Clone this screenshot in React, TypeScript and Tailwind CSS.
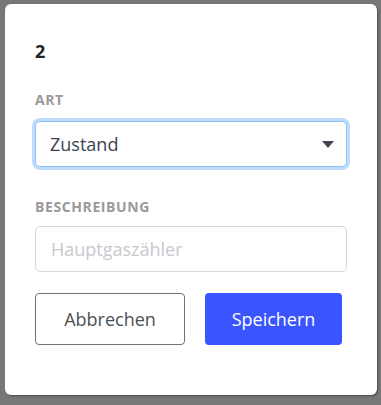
import React from 'react';

const App: React.FC = () => {
  return (
    <div
      className="h-[405px] w-[381px] bg-[#777777] pt-[4px] pl-[5px]"
      style={{ fontFamily: '"Open Sans", "Noto Sans", sans-serif' }}
    >
      {/* Dialog */}
      <div className="w-[372px] h-[391px] bg-white rounded-[6px] px-[30px] pt-[33px] shadow-[1px_1px_2px_rgba(0,0,0,0.35)]">
        <h2 className="text-[18px] leading-[28px] font-bold text-[#1f2328]">2</h2>

        <label className="block mt-[25px] mb-[11px] text-[14px] leading-[20px] font-bold uppercase tracking-[0.6px] text-[#9a9a9a]">
          Art
        </label>
        <div className="relative">
          <select
            defaultValue="Zustand"
            className="appearance-none w-full h-[46px] rounded-[5px] border border-[#8fc1fb] ring-[3px] ring-[#bfdcfd] bg-white pl-[14px] pr-10 text-[18px] text-[#3b4350] outline-none"
          >
            <option>Zustand</option>
            <option>Zähler</option>
          </select>
          <svg
            className="absolute right-[13px] top-[20px] pointer-events-none"
            width="12"
            height="7"
            viewBox="0 0 12 7"
          >
            <path d="M0 0 H12 L6 7 Z" fill="#3f4650" />
          </svg>
        </div>

        <label className="block mt-[30px] mb-[9px] text-[14px] leading-[20px] font-bold uppercase tracking-[0.6px] text-[#9a9a9a]">
          Beschreibung
        </label>
        <input
          type="text"
          placeholder="Hauptgaszähler"
          className="block w-full h-[46px] rounded-[5px] border border-[#d4d7dc] bg-white pl-[15px] text-[18px] text-[#3b4350] placeholder:text-[#c6c9ce] outline-none"
        />

        <div className="flex gap-[20px] mt-[21px]">
          <button className="w-[150px] h-[52px] rounded-[4px] border border-[#6c737d] bg-white text-[18px] text-[#4a4f56]">
            Abbrechen
          </button>
          <button className="w-[137px] h-[52px] rounded-[4px] bg-[#3a54ff] text-[18px] text-white">
            Speichern
          </button>
        </div>
      </div>
    </div>
  );
};

export default App;
